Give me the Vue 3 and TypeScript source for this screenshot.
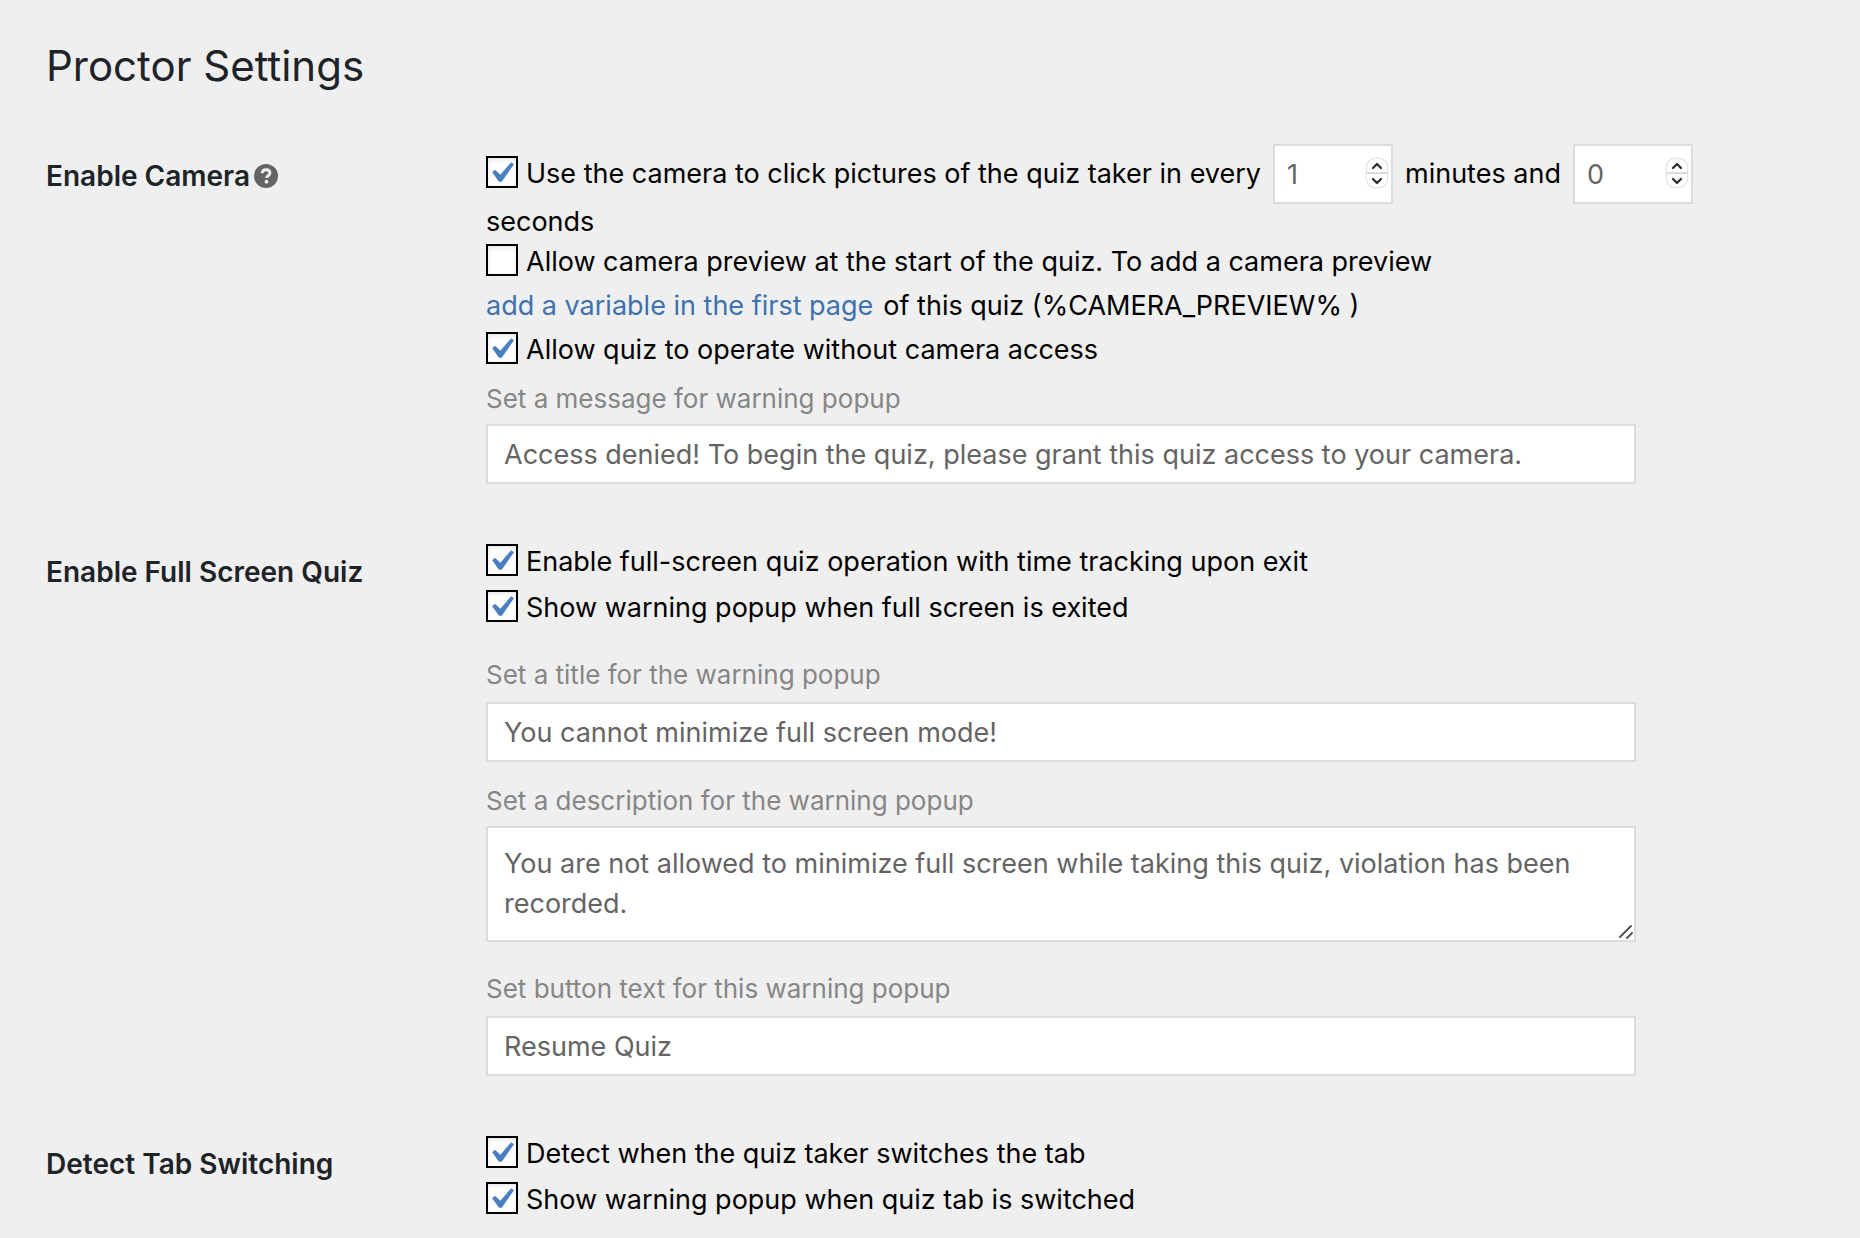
<script setup lang="ts">
import { reactive } from 'vue'

const settings = reactive({
  camera: true,
  minutes: 1,
  seconds: 0,
  preview: false,
  withoutCamera: true,
  cameraMessage: 'Access denied! To begin the quiz, please grant this quiz access to your camera.',
  fullScreen: true,
  fullScreenPopup: true,
  popupTitle: 'You cannot minimize full screen mode!',
  popupDescription:
    'You are not allowed to minimize full screen while taking this quiz, violation has been recorded.',
  popupButton: 'Resume Quiz',
  detectTab: true,
  tabPopup: true,
})

function step(key: 'minutes' | 'seconds', by: number): void {
  settings[key] = Math.max(0, Number(settings[key]) + by)
}
</script>

<template>
  <main class="page">
    <h1>Proctor Settings</h1>
    <form class="sections" @submit.prevent>
      <section class="section">
        <h2>
          Enable Camera
          <svg class="help-icon" viewBox="0 0 24 24" role="img" aria-label="Help">
            <circle cx="12" cy="12" r="12" fill="#646464" />
            <path d="M8.200 9.100C8.300 6.900 9.900 5.700 12.100 5.700c2.200 0 3.800 1.200 3.800 3.200 0 2.900-3.300 2.700-3.300 5.200" fill="none" stroke="#efefef" stroke-width="3" />
            <circle cx="12.500" cy="17.700" r="1.900" fill="#efefef" />
          </svg>
        </h2>
        <div class="controls">
          <div class="sentence">
            <span class="check">
              <span class="box">
                <input id="camera" v-model="settings.camera" type="checkbox" />
                <svg v-if="settings.camera" viewBox="0 0 20 20" aria-hidden="true"><path d="M14.83 4.89l1.34.94-5.81 8.38H9.02L5.78 9.67l1.34-1.25 2.57 2.4z" /></svg>
              </span>
              <label for="camera">Use the camera to click pictures of the quiz taker in every</label>
            </span>
            <span class="number">
              <input id="minutes" v-model="settings.minutes" type="number" min="0" aria-label="Minutes" />
              <span class="spinner">
                <button type="button" aria-label="More minutes" @click="step('minutes', 1)">
                  <svg viewBox="0 0 12 8"><path d="M2 6l4-4 4 4" /></svg>
                </button>
                <button type="button" aria-label="Fewer minutes" @click="step('minutes', -1)">
                  <svg viewBox="0 0 12 8"><path d="M2 2l4 4 4-4" /></svg>
                </button>
              </span>
            </span>
            <label class="unit" for="minutes">minutes and</label>
            <span class="number">
              <input id="seconds" v-model="settings.seconds" type="number" min="0" />
              <span class="spinner">
                <button type="button" aria-label="More seconds" @click="step('seconds', 1)">
                  <svg viewBox="0 0 12 8"><path d="M2 6l4-4 4 4" /></svg>
                </button>
                <button type="button" aria-label="Fewer seconds" @click="step('seconds', -1)">
                  <svg viewBox="0 0 12 8"><path d="M2 2l4 4 4-4" /></svg>
                </button>
              </span>
            </span>
          </div>
          <label class="seconds" for="seconds">seconds</label>
          <div class="check line">
            <span class="box">
              <input id="preview" v-model="settings.preview" type="checkbox" />
              <svg v-if="settings.preview" viewBox="0 0 20 20" aria-hidden="true"><path d="M14.83 4.89l1.34.94-5.81 8.38H9.02L5.78 9.67l1.34-1.25 2.57 2.4z" /></svg>
            </span>
            <label for="preview">Allow camera preview at the start of the quiz. To add a camera preview</label>
          </div>
          <div class="line link-line">
            <a href="#first-page">add a variable in the first page</a>
            <span>of this quiz (%CAMERA_PREVIEW% )</span>
          </div>
          <div class="check line">
            <span class="box">
              <input id="without" v-model="settings.withoutCamera" type="checkbox" />
              <svg v-if="settings.withoutCamera" viewBox="0 0 20 20" aria-hidden="true"><path d="M14.83 4.89l1.34.94-5.81 8.38H9.02L5.78 9.67l1.34-1.25 2.57 2.4z" /></svg>
            </span>
            <label for="without">Allow quiz to operate without camera access</label>
          </div>
          <div class="field message">
            <label for="message">Set a message for warning popup</label>
            <input id="message" v-model="settings.cameraMessage" type="text" />
          </div>
        </div>
      </section>

      <section class="section">
        <h2>Enable Full Screen Quiz</h2>
        <div class="controls">
          <div class="check line roomy">
            <span class="box">
              <input id="full" v-model="settings.fullScreen" type="checkbox" />
              <svg v-if="settings.fullScreen" viewBox="0 0 20 20" aria-hidden="true"><path d="M14.83 4.89l1.34.94-5.81 8.38H9.02L5.78 9.67l1.34-1.25 2.57 2.4z" /></svg>
            </span>
            <label for="full">Enable full-screen quiz operation with time tracking upon exit</label>
          </div>
          <div class="check line roomy">
            <span class="box">
              <input id="full-popup" v-model="settings.fullScreenPopup" type="checkbox" />
              <svg v-if="settings.fullScreenPopup" viewBox="0 0 20 20" aria-hidden="true"><path d="M14.83 4.89l1.34.94-5.81 8.38H9.02L5.78 9.67l1.34-1.25 2.57 2.4z" /></svg>
            </span>
            <label for="full-popup">Show warning popup when full screen is exited</label>
          </div>
          <div class="field title">
            <label for="title">Set a title for the warning popup</label>
            <input id="title" v-model="settings.popupTitle" type="text" />
          </div>
          <div class="field description">
            <label for="description">Set a description for the warning popup</label>
            <div class="area">
              <textarea id="description" v-model="settings.popupDescription"></textarea>
              <svg viewBox="0 0 16 16" aria-hidden="true"><path d="M2 13L13 2M9 14l5-5" /></svg>
            </div>
          </div>
          <div class="field button-text">
            <label for="button-text">Set button text for this warning popup</label>
            <input id="button-text" v-model="settings.popupButton" type="text" />
          </div>
        </div>
      </section>

      <section class="section">
        <h2>Detect Tab Switching</h2>
        <div class="controls">
          <div class="check line roomy">
            <span class="box">
              <input id="tab" v-model="settings.detectTab" type="checkbox" />
              <svg v-if="settings.detectTab" viewBox="0 0 20 20" aria-hidden="true"><path d="M14.83 4.89l1.34.94-5.81 8.38H9.02L5.78 9.67l1.34-1.25 2.57 2.4z" /></svg>
            </span>
            <label for="tab">Detect when the quiz taker switches the tab</label>
          </div>
          <div class="check line roomy">
            <span class="box">
              <input id="tab-popup" v-model="settings.tabPopup" type="checkbox" />
              <svg v-if="settings.tabPopup" viewBox="0 0 20 20" aria-hidden="true"><path d="M14.83 4.89l1.34.94-5.81 8.38H9.02L5.78 9.67l1.34-1.25 2.57 2.4z" /></svg>
            </span>
            <label for="tab-popup">Show warning popup when quiz tab is switched</label>
          </div>
        </div>
      </section>
    </form>
  </main>
</template>

<style>
body {
  background: #efefef;
}
</style>

<style scoped>
.page {
  min-height: 100vh;
  padding: 38px 46px 16px;
  font-family: Inter, 'Liberation Sans', sans-serif;
  font-size: 27px;
  line-height: 36px;
  color: #000;
}
* {
  box-sizing: border-box;
}
h1 {
  margin: 0 0 48px;
  font-size: 42px;
  font-weight: 400;
  line-height: 56px;
  color: #1d2327;
}
.sections {
  display: flex;
  flex-direction: column;
  gap: 54px;
}
.section {
  display: grid;
  grid-template-columns: 440px minmax(0, 1fr);
}
h2 {
  display: flex;
  align-items: center;
  gap: 4px;
  margin: 0;
  padding-top: 16px;
  align-self: start;
  font-size: 28px;
  font-weight: 600;
  line-height: 36px;
  color: #1d2327;
}
.help-icon {
  width: 24px;
  height: 24px;
}
input,
textarea {
  margin: 0;
  font: inherit;
  color: #646464;
  background: #fff;
  border: 2px solid #dcdcdc;
  border-radius: 0;
  outline: none;
}
.sentence {
  display: flex;
  align-items: flex-start;
  gap: 12px;
  padding-top: 2px;
}
.sentence > .check,
.unit {
  padding-top: 12px;
  white-space: nowrap;
}
.check {
  display: flex;
  align-items: flex-start;
  gap: 8px;
}
.box {
  position: relative;
  flex: none;
  width: 32px;
  height: 32px;
}
.box input {
  display: block;
  appearance: none;
  width: 32px;
  height: 32px;
  border: 2px solid #000;
  box-shadow: inset 0 2px 4px rgba(0, 0, 0, 0.1);
}
.box svg {
  position: absolute;
  top: -4px;
  left: -6px;
  width: 42px;
  height: 42px;
  fill: #4a80bf;
  pointer-events: none;
}
.number {
  position: relative;
  flex: none;
  width: 120px;
}
.number input {
  display: block;
  width: 100%;
  height: 60px;
  padding: 0 36px 0 12px;
  appearance: textfield;
}
.number input::-webkit-inner-spin-button {
  appearance: none;
}
.spinner {
  position: absolute;
  top: 15px;
  right: 6px;
  display: flex;
  flex-direction: column;
  width: 20px;
  height: 28px;
  border-radius: 8px;
  background: #fff;
  box-shadow: 0 0 2px rgba(0, 0, 0, 0.4);
  overflow: hidden;
}
.spinner button {
  flex: 1;
  display: flex;
  align-items: center;
  justify-content: center;
  padding: 0;
  border: 0;
  background: none;
}
.spinner button + button {
  border-top: 2px solid #dcdcdc;
}
.spinner svg {
  width: 12px;
  height: 8px;
  fill: none;
  stroke: #333;
  stroke-width: 2.4;
  stroke-linecap: round;
  stroke-linejoin: round;
}
.seconds {
  display: block;
  height: 34px;
}
.line {
  padding: 6px 0 2px;
}
.roomy {
  padding-bottom: 4px;
}
.link-line {
  display: flex;
  gap: 10px;
}
a {
  color: #3d72ae;
  text-decoration: none;
}
.field {
  display: flex;
  flex-direction: column;
  gap: 10px;
  max-width: 1150px;
}
.field label {
  font-size: 26px;
  line-height: 34px;
  color: #868686;
}
.field input {
  width: 100%;
  height: 60px;
  padding: 0 16px;
}
.message {
  gap: 8px;
  margin-top: 12px;
}
.title {
  margin-top: 28px;
}
.description {
  gap: 8px;
  margin-top: 22px;
}
.button-text {
  margin-top: 30px;
}
.area {
  position: relative;
}
.area textarea {
  display: block;
  width: 100%;
  height: 116px;
  padding: 16px;
  line-height: 40px;
  resize: none;
  overflow: hidden;
}
.area svg {
  position: absolute;
  right: 2px;
  bottom: 2px;
  width: 16px;
  height: 16px;
  fill: none;
  stroke: #555;
  stroke-width: 2;
  stroke-linecap: round;
}
</style>
